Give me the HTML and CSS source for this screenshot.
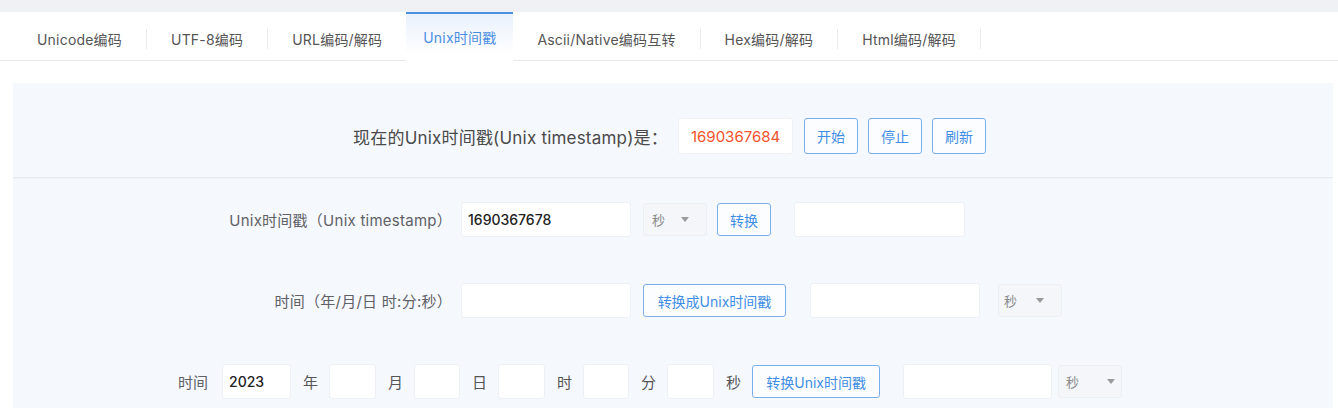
FILE: index.html
```html
<!DOCTYPE html>
<html lang="zh-CN">
<head>
<meta charset="utf-8">
<title>Unix时间戳</title>
<link rel="stylesheet" href="styles.css">
</head>
<body>
<div class="topbar"></div>
<nav class="tabs">
  <a class="tab">Unicode编码</a><span class="sep"></span>
  <a class="tab">UTF-8编码</a><span class="sep"></span>
  <a class="tab">URL编码/解码</a>
  <a class="tab tab-active">Unix时间戳</a>
  <a class="tab">Ascii/Native编码互转</a><span class="sep"></span>
  <a class="tab">Hex编码/解码</a><span class="sep"></span>
  <a class="tab">Html编码/解码</a><span class="sep"></span>
</nav>
<main class="content">
  <section class="panel">
    <div class="now-row">
      <span class="now-label">现在的Unix时间戳(Unix timestamp)是：</span>
      <span class="now-value">1690367684</span>
      <button class="btn btn-now">开始</button>
      <button class="btn btn-now">停止</button>
      <button class="btn btn-now">刷新</button>
    </div>
    <div class="form">
      <div class="row">
        <label class="row-label">Unix时间戳（Unix timestamp）</label>
        <input class="field w170" value="1690367678">
        <div class="select s-row2"><span>秒</span><i class="caret"></i></div>
        <button class="btn b-conv">转换</button>
        <input class="field w171 ml23">
      </div>
      <div class="row">
        <label class="row-label">时间（年/月/日 时:分:秒）</label>
        <input class="field w170">
        <button class="btn b-conv2">转换成Unix时间戳</button>
        <input class="field w170 ml24">
        <div class="select s-row3"><span>秒</span><i class="caret"></i></div>
      </div>
      <div class="row row-date">
        <span class="unit first">时间</span>
        <input class="field w69" value="2023">
        <span class="unit">年</span>
        <input class="field w47">
        <span class="unit">月</span>
        <input class="field w46">
        <span class="unit">日</span>
        <input class="field w47">
        <span class="unit">时</span>
        <input class="field w46">
        <span class="unit">分</span>
        <input class="field w47">
        <span class="unit">秒</span>
        <button class="btn b-conv3">转换Unix时间戳</button>
        <input class="field w149 ml23">
        <div class="select s-row4"><span>秒</span><i class="caret"></i></div>
      </div>
    </div>
  </section>
</main>
</body>
</html>
```
FILE: styles.css
```css
* { box-sizing: border-box; }
html, body { margin: 0; padding: 0; }
body {
  background: #ffffff;
  font-family: Inter, "Noto Sans CJK SC", sans-serif;
  color: #333;
  height: 408px;
  overflow: hidden;
}
.topbar {
  height: 12px;
  background: #eff1f4;
}
.tabs {
  display: flex;
  align-items: stretch;
  height: 49px;
  padding-left: 13px;
  border-bottom: 1px solid #e6e7ea;
}
.tab {
  display: flex;
  align-items: center;
  padding: 5px 24px 0;
  font-size: 14px;
  letter-spacing: 0.2px;
  color: #555;
  white-space: nowrap;
}
.tab-active {
  padding: 0 17px 2px;
  color: #4a8ee2;
  border-top: 2px solid #4a90e2;
  background: linear-gradient(#e9f1fc, #ffffff 85%);
  margin-bottom: -1px;
}
.sep {
  align-self: center;
  width: 1px;
  height: 20px;
  margin-top: 5px;
  background: #eaeaea;
}
.content {
  padding: 22px 5px 0 13px;
}
.panel {
  background: #f5f8fd;
  height: 330px;
}
.now-row {
  display: flex;
  align-items: center;
  justify-content: center;
  padding: 35px 7px 23px 0;
  border-bottom: 1px solid #e7ebf1;
  box-shadow: 0 1px 2px rgba(0, 0, 0, 0.02);
}
.now-label {
  font-size: 17px;
  letter-spacing: 0.2px;
  color: #4a4a4a;
  margin-right: 10px;
}
.now-value {
  display: flex;
  align-items: center;
  width: 115px;
  height: 36px;
  padding-left: 12px;
  background: #fff;
  border-radius: 3px;
  border: 1px solid #f0f2f5;
  color: #f4532c;
  font-size: 15px;
  margin-right: 11px;
}
.btn {
  height: 33px;
  padding: 0 12px;
  border: 1px solid #7aafee;
  border-radius: 3px;
  background: #fbfdff;
  color: #3f8de4;
  font-family: Inter, "Noto Sans CJK SC", sans-serif;
  font-size: 14px;
  white-space: nowrap;
}
.btn-now {
  height: 36px;
  width: 54px;
  padding: 0;
  margin-right: 10px;
}
.btn-now:last-child { margin-right: 0; }
.form {
  padding-top: 24px;
  display: flex;
  flex-direction: column;
  gap: 46px;
}
.row {
  display: flex;
  align-items: center;
  height: 35px;
}
.row-label {
  width: 448px;
  flex-shrink: 0;
  text-align: right;
  padding-right: 9px;
  font-size: 15px;
  letter-spacing: 0.25px;
  color: #5f6166;
  white-space: nowrap;
}
.field {
  height: 35px;
  flex-shrink: 0;
  border: 1px solid #edf0f4;
  border-radius: 3px;
  background: #fff;
  padding: 0 6px;
  font-family: Inter, "Noto Sans CJK SC", sans-serif;
  font-size: 14px;
  font-weight: 500;
  color: #222;
  outline: none;
}
.w170 { width: 170px; }
.w171 { width: 171px; }
.w69 { width: 69px; }
.w47 { width: 47px; }
.w46 { width: 46px; }
.w149 { width: 149px; }
.ml23 { margin-left: 23px; }
.ml24 { margin-left: 24px; }
.select {
  display: flex;
  align-items: center;
  flex-shrink: 0;
  width: 64px;
  height: 33px;
  padding-left: 8px;
  background: #f4f6f9;
  border: 1px solid #eceff3;
  border-radius: 3px;
  font-size: 13px;
  color: #8a8a8a;
}
.caret {
  width: 0;
  height: 0;
  border-left: 4px solid transparent;
  border-right: 4px solid transparent;
  border-top: 5px solid #9a9a9a;
  margin-left: 16px;
}
.s-row2 { margin-left: 12px; }
.s-row3 { margin-left: 18px; padding-left: 5px; }
.s-row3 .caret { margin-left: 19px; }
.s-row4 { margin-left: 6px; padding-left: 7px; }
.s-row4 .caret { margin-left: 28px; }
.b-conv { margin-left: 10px; width: 54px; padding: 0; }
.b-conv2 { margin-left: 12px; width: 143px; padding: 0; }
.b-conv3 { width: 128px; padding: 0; }
.row-date { padding-left: 165px; }
.unit {
  font-size: 15px;
  color: #555;
  margin: 0 11px 0 12px;
  white-space: nowrap;
}
.unit.first { margin-left: 0; margin-right: 14px; color: #5f6166; }
```
